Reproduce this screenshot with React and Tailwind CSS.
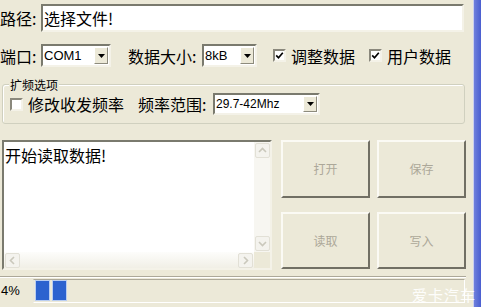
import React from 'react';

const cjk = { fontFamily: '"Noto Sans CJK SC", "Noto Sans", sans-serif' };
const latin = { fontFamily: '"Liberation Sans", Arial, sans-serif' };

function Sunken({ className = '', children }) {
  return (
    <div className={`border-2 border-t-[#7a7a6e] border-l-[#7a7a6e] border-b-[#f4f2e8] border-r-[#f4f2e8] bg-white ${className}`}>
      {children}
    </div>
  );
}

function Combo({ value, width, size = 'text-[13px]' }) {
  return (
    <Sunken className={`${width} h-full flex items-stretch`}>
      <div className={`flex-1 flex items-center pl-[1px] ${size} text-black leading-none`} style={latin}>
        {value}
      </div>
      <div className="w-[14px] my-[1px] mr-[1px] flex items-center justify-center bg-[#ECE9D8] border border-t-[#fff] border-l-[#fff] border-b-[#8d8b7d] border-r-[#8d8b7d]">
        <svg width="7" height="4" viewBox="0 0 7 4">
          <path d="M0 0 H7 L3.5 4 Z" fill="#000" />
        </svg>
      </div>
    </Sunken>
  );
}

function Check({ checked }) {
  return (
    <div className="w-[13px] h-[13px] shrink-0 flex items-center justify-center bg-white border-2 border-t-[#8a887c] border-l-[#8a887c] border-b-[#f4f2e8] border-r-[#f4f2e8]">
      {checked && (
        <svg width="9" height="9" viewBox="0 0 9 9">
          <path d="M1.2 4.4 L3.5 6.8 L7.8 1.8" stroke="#000" strokeWidth="1.7" fill="none" />
        </svg>
      )}
    </div>
  );
}

function Arrow({ dir }) {
  const paths = {
    up: 'M2 7 L5.5 3.5 L9 7',
    down: 'M2 4 L5.5 7.5 L9 4',
    left: 'M7 2 L3.5 5.5 L7 9',
    right: 'M4 2 L7.5 5.5 L4 9',
  };
  return (
    <div className="w-[15px] h-[15px] flex items-center justify-center rounded-[2px] bg-[#f4f3ee] border border-[#e2e0d6]">
      <svg width="11" height="11" viewBox="0 0 11 11">
        <path d={paths[dir]} stroke="#cac8bc" strokeWidth="1.6" fill="none" />
      </svg>
    </div>
  );
}

function Btn({ label }) {
  return (
    <div
      className="flex items-center justify-center bg-[#ECE9D8] border-2 border-t-[#fbfaf4] border-l-[#fbfaf4] border-b-[#716f64] border-r-[#716f64] text-[12px] text-[#aca899]"
      style={cjk}
    >
      {label}
    </div>
  );
}

export default function App() {
  return (
    <div className="relative w-[481px] h-[307px] bg-[#ECE9D8] flex overflow-hidden text-black" style={cjk}>
      <div className="w-[473px] flex flex-col">
        {/* path row */}
        <div className="mt-[4px] h-[28px] flex items-center">
          <div className="w-[41px] text-[16px] leading-none">路径:</div>
          <Sunken className="w-[423px] h-full flex items-center pl-[1px] text-[16px] leading-none">
            选择文件!
          </Sunken>
        </div>

        {/* port row */}
        <div className="mt-[12px] h-[23px] flex items-center text-[16px] leading-none">
          <div className="w-[41px]">端口:</div>
          <Combo value="COM1" width="w-[70px]" />
          <div className="ml-[17px] w-[74px]">数据大小:</div>
          <Combo value="8kB" width="w-[55px]" />
          <div className="ml-[16px]"><Check checked /></div>
          <div className="ml-[5px]">调整数据</div>
          <div className="ml-[14px]"><Check checked /></div>
          <div className="ml-[5px]">用户数据</div>
        </div>

        {/* group box */}
        <div className="relative mt-[17px] ml-[2px] w-[463px] h-[40px] border border-[#d0d0bf] rounded-[3px] shadow-[inset_1px_1px_0_#fff]">
          <span className="absolute -top-[6px] left-[6px] px-[1px] bg-[#ECE9D8] text-[12px] leading-[12px]">扩频选项</span>
          <div className="h-full flex items-center pl-[7px] text-[16px] leading-none">
            <Check />
            <div className="ml-[5px]">修改收发频率</div>
            <div className="ml-[14px] w-[75px]">频率范围:</div>
            <div className="h-[22px]">
              <Combo value="29.7-42Mhz" width="w-[107px]" size="text-[12px]" />
            </div>
          </div>
        </div>

        {/* text area + buttons */}
        <div className="mt-[16px] h-[130px] flex">
          <Sunken className="ml-[2px] w-[270px] h-full flex flex-col">
            <div className="flex-1 flex min-h-0">
              <div className="flex-1 pl-[1px] pt-[5px] text-[16px] leading-none">开始读取数据!</div>
              <div className="w-[16px] flex flex-col justify-between items-center bg-[#f7f6f1] pt-[1px] pb-[1px]">
                <Arrow dir="up" />
                <Arrow dir="down" />
              </div>
            </div>
            <div className="h-[16px] flex">
              <div className="flex-1 flex items-center justify-between pl-[1px] pr-[1px] bg-gradient-to-b from-[#fdfdfb] to-[#f1efe6]">
                <Arrow dir="left" />
                <Arrow dir="right" />
              </div>
              <div className="w-[16px] bg-[#ECE9D8]" />
            </div>
          </Sunken>
          <div className="ml-[9px] grid grid-cols-[89px_89px] grid-rows-[58px_57px] gap-x-[7px] gap-y-[14px]">
            <Btn label="打开" />
            <Btn label="保存" />
            <Btn label="读取" />
            <Btn label="写入" />
          </div>
        </div>

        {/* separator */}
        <div className="mt-[6px] w-[466px] h-[2px] border-t border-t-[#aca899] border-b border-b-white" />

        {/* progress row */}
        <div className="h-[25px] flex items-center">
          <div className="w-[33px] pl-[1px] text-[13px] leading-none" style={latin}>4%</div>
          <div className="w-[432px] h-[24px] flex items-center gap-[2px] pl-[1px] border border-t-[#aca899] border-l-[#e8e6dc] border-b-white border-r-white">
            <div className="w-[15px] h-[21px] bg-[#2c62cf] border border-[#b9cdf1]" />
            <div className="w-[15px] h-[21px] bg-[#2c62cf] border border-[#b9cdf1]" />
          </div>
        </div>
      </div>

      {/* window border */}
      <div className="w-[8px] flex">
        <div className="w-[1px] bg-[#c9cff0]" />
        <div className="flex-1 bg-gradient-to-r from-[#6f80dc] to-[#4a5ed0]" />
      </div>

      <div className="absolute right-[5px] bottom-[5px] text-[15px] leading-none text-white/90 tracking-[1px]" style={cjk}>
        爱卡汽车
      </div>
    </div>
  );
}
